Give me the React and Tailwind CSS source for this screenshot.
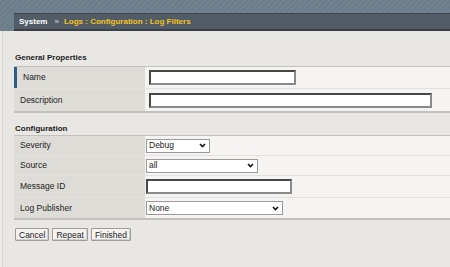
export default function App() {
  const label = "w-[132px] shrink-0 flex items-center bg-[#dedcd7] border-r border-r-[#f4f3f1] pl-[6px]";
  const field = "bg-white border-2 border-t-[#474747] border-l-[#474747] border-r-[#8a8a8a] border-b-[#8a8a8a] outline-none";

  return (
    <div className="w-[450px] h-[267px] overflow-hidden bg-[#e8e7e3] font-['Liberation_Sans',Arial,sans-serif] text-[8.5px] text-[#222]">
      {/* top banner */}
      <div className="h-[31px] pt-[13px] pl-[14px] bg-[#6e7f8f] bg-[repeating-linear-gradient(135deg,#72838f_0px,#72838f_2px,#6b7c8c_2px,#6b7c8c_4px)]">
        <div className="h-[18px] flex items-center pl-[5px] bg-[#525c67] border-t border-[#3e4650] border-b-2 border-b-[#39404a] text-[8px] font-bold">
          <span className="text-white">System</span>
          <span className="ml-[7px] text-[#d8dde2] font-normal">»</span>
          <span className="ml-[5px] text-[#f2c21c]">Logs : Configuration : Log Filters</span>
        </div>
      </div>

      <div className="flex">
        <div className="w-[3px] h-[236px] bg-[#eeede9] border-r border-[#d5d4cf]" />
        <div className="flex-1 pl-[11px]">
          <div className="mt-[22px] mb-[3px] pl-[1px] font-bold text-[8px] leading-[10px]">General Properties</div>
          <div className="border-t border-b-2 border-[#c2c1bd] bg-[#f5f4f2]">
            <div className="flex h-[22px] border-b border-[#e2e1dd]">
              <div className={label + " border-l-[3px] border-l-[#2d5b8c]"}>Name</div>
              <div className="flex items-center pl-[3px]">
                <input className={"w-[147px] h-[15px] " + field} />
              </div>
            </div>
            <div className="flex h-[22px]">
              <div className={label}>Description</div>
              <div className="flex items-center pl-[3px]">
                <input className={"w-[283px] h-[15px] " + field} />
              </div>
            </div>
          </div>

          <div className="mt-[11px] mb-[1px] pl-[1px] font-bold text-[8px] leading-[10px]">Configuration</div>
          <div className="border-t border-b-2 border-[#c2c1bd] bg-[#f5f4f2]">
            <div className="flex h-[20px] border-b border-[#e2e1dd]">
              <div className={label}>Severity</div>
              <div className="flex items-center">
                <Select w="w-[64px]" value="Debug" />
              </div>
            </div>
            <div className="flex h-[20px] border-b border-[#e2e1dd]">
              <div className={label}>Source</div>
              <div className="flex items-center">
                <Select w="w-[112px]" value="all" />
              </div>
            </div>
            <div className="flex h-[22px] border-b border-[#e2e1dd]">
              <div className={label}>Message ID</div>
              <div className="flex items-center">
                <input className={"w-[146px] h-[15px] " + field} />
              </div>
            </div>
            <div className="flex h-[20px]">
              <div className={label}>Log Publisher</div>
              <div className="flex items-center">
                <Select w="w-[137px]" value="None" />
              </div>
            </div>
          </div>

          <div className="flex gap-[3px] mt-[8px] pl-[1px]">
            <Btn>Cancel</Btn>
            <Btn>Repeat</Btn>
            <Btn>Finished</Btn>
          </div>
        </div>
      </div>
    </div>
  );
}

function Select({ w, value }) {
  return (
    <div className={w + " h-[14px] flex items-center justify-between bg-white border border-[#9a9a9a] pl-[2px] pr-[3px]"}>
      <span>{value}</span>
      <svg width="7" height="5" viewBox="0 0 7 5">
        <path d="M1 1 L3.5 3.5 L6 1" fill="none" stroke="#111" strokeWidth="1.6" />
      </svg>
    </div>
  );
}

function Btn({ children }) {
  return (
    <button className="h-[13px] px-[3px] leading-[10px] bg-[#f4f3f0] border border-[#9d9c98] rounded-[1px] text-[8.5px] text-[#222] shadow-[inset_-1px_-1px_0_#d0cfcb]">
      {children}
    </button>
  );
}
